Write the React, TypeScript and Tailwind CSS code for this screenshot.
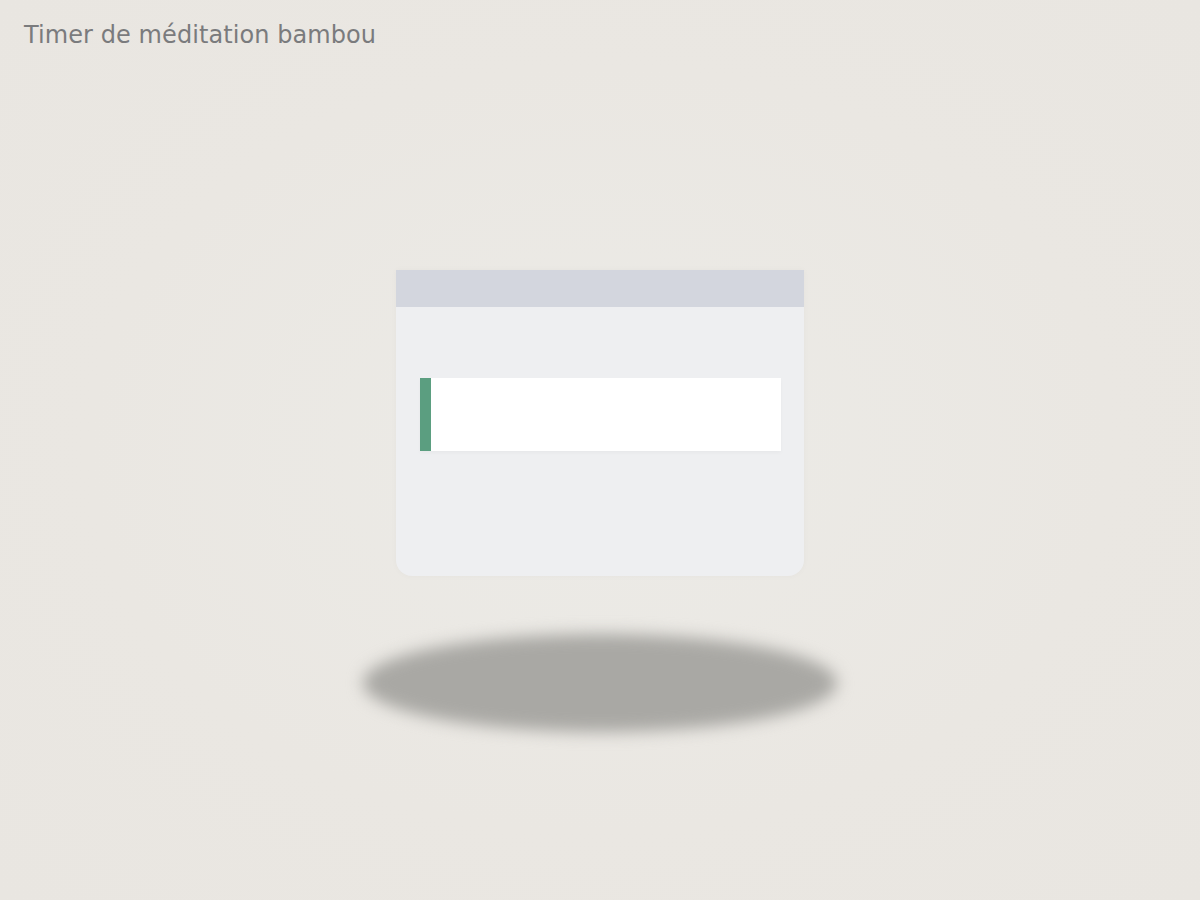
import React from 'react';

export default function App() {
  return (
    <div className="h-[900px] w-full overflow-hidden bg-[#eae7e2] bg-[radial-gradient(ellipse_at_center,#ecebe7_0%,#eae7e2_60%,#e9e6e1_100%)] font-['DejaVu_Sans',sans-serif]">
      {/* Title */}
      <div className="px-6 pt-[19px]">
        <h1 className="text-[24px] leading-[32px] font-normal tracking-[0.08px] text-[#7a7b7d]">Timer de méditation bambou</h1>
      </div>

      {/* Timer card */}
      <div className="mx-auto mt-[219px] h-[306px] w-[408px] overflow-hidden rounded-b-2xl bg-[#eeeff1] shadow-[0_0_6px_rgba(0,0,0,0.03)]">
        <div className="h-[37px] bg-[#d3d6de]" />
        <div className="pl-6 pr-[23px] pt-[71px]">
          <div className="h-[73px] border-l-[11px] border-[#5b9e80] bg-white shadow-[0_2px_4px_rgba(0,0,0,0.03)]" />
        </div>
      </div>

      {/* Floor shadow */}
      <div className="mx-auto mt-[58px] h-[98px] w-[474px] rounded-[50%] bg-[#a9a8a4] blur-[8px]" />
    </div>
  );
}
